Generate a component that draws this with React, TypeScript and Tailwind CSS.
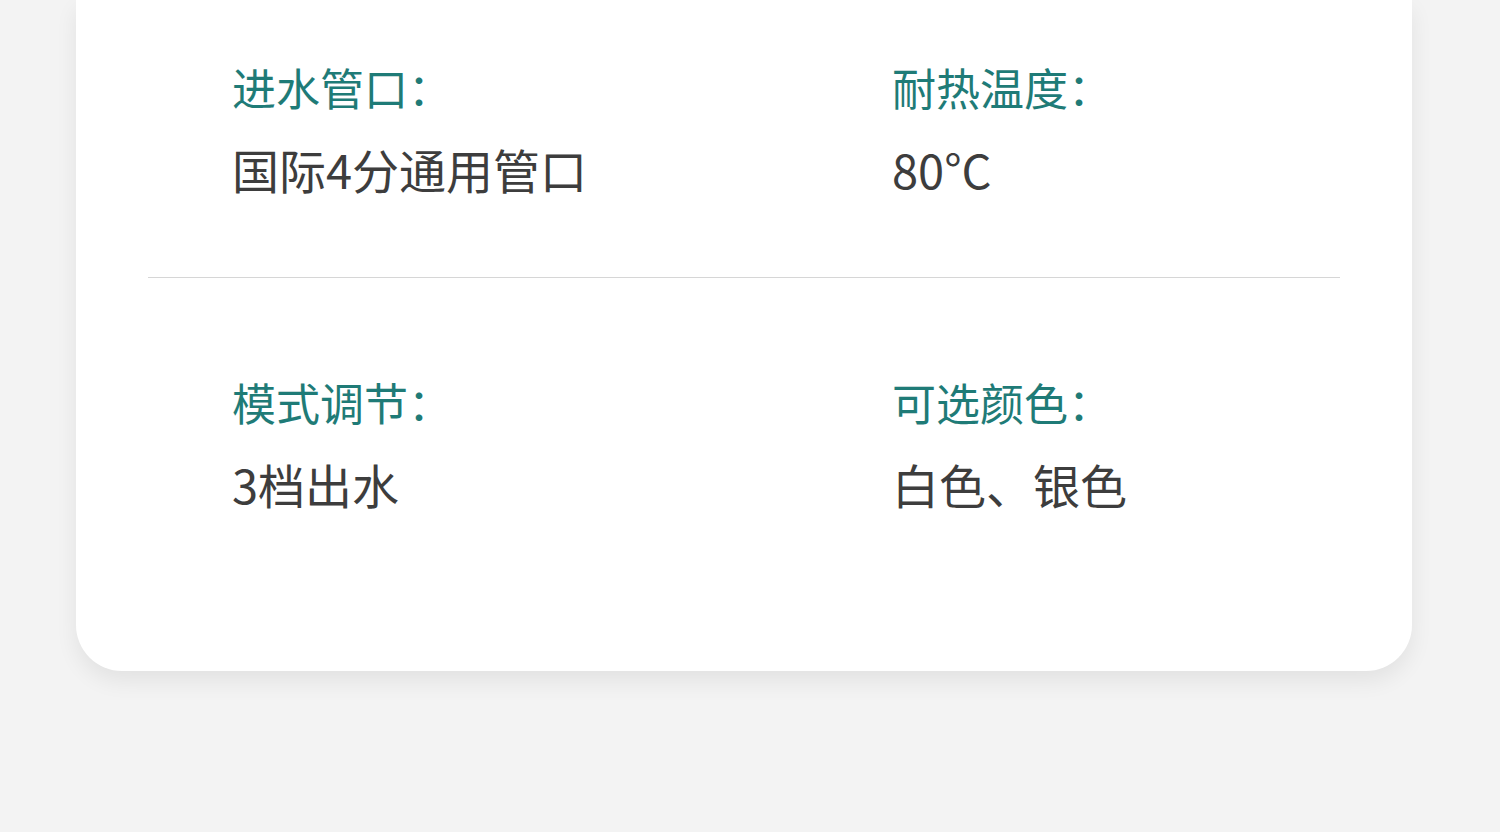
import React from "react";

const font = { fontFamily: '"Noto Sans CJK SC", "Noto Sans", sans-serif' };

function Item({ label, value }: { label: string; value: string }) {
  return (
    <div className="flex flex-col">
      <div className="h-[44px] text-[44px] leading-[44px] text-[#1f7b77]">{label}</div>
      <div className="mt-[36px] h-[47px] text-[47px] leading-[47px] text-[#3d3d3d]">{value}</div>
    </div>
  );
}

export default function App() {
  return (
    <div className="w-[1500px] h-[832px] bg-[#f3f3f3] overflow-hidden" style={font}>
      <div className="ml-[76px] w-[1336px] h-[671px] bg-white rounded-b-[46px] shadow-[0_10px_22px_rgba(0,0,0,0.07)] pt-[65px]">
        <div className="grid grid-cols-[660px_1fr] pl-[156px]">
          <Item label="进水管口：" value="国际4分通用管口" />
          <Item label="耐热温度：" value="80°C" />
        </div>
        <div className="mx-[72px] mt-[85px] h-px bg-[#d6d6d6]" />
        <div className="mt-[102px] grid grid-cols-[660px_1fr] pl-[156px]">
          <Item label="模式调节：" value="3档出水" />
          <Item label="可选颜色：" value="白色、银色" />
        </div>
      </div>
    </div>
  );
}
